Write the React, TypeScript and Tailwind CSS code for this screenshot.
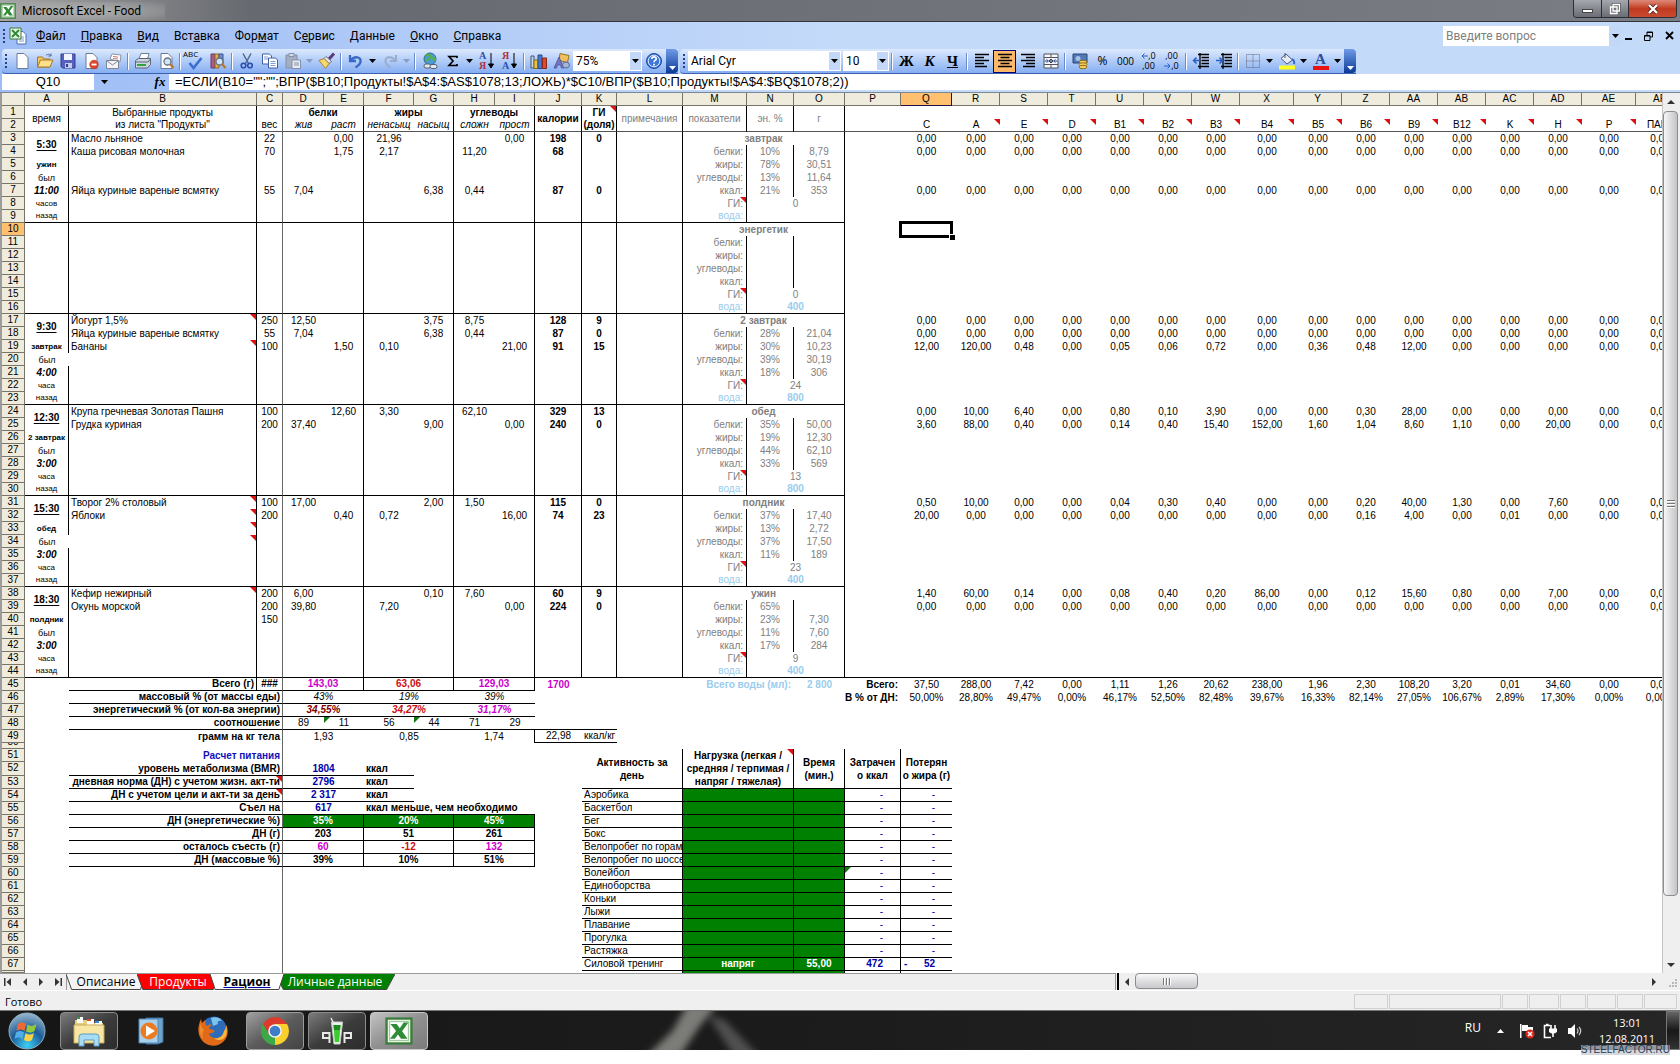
import type { ReactNode } from "react";
import clsx from "clsx";

interface Cell {
  value?: ReactNode;
  style?: string;
  colSpan?: number;
  rowSpan?: number;
  note?: boolean;
  flag?: boolean;
}

const COLUMNS = [
  "A", "B", "C", "D", "E", "F", "G", "H", "I", "J", "K", "L", "M", "N", "O", "P",
  "Q", "R", "S", "T", "U", "V", "W", "X", "Y", "Z", "AA", "AB", "AC", "AD", "AE", "AF",
];

const WIDTHS = [
  "w-[44px]", "w-[188px]", "w-[26px]", "w-[41px]", "w-[40px]", "w-[50px]", "w-[40px]",
  "w-[41px]", "w-[40px]", "w-[47px]", "w-[35px]", "w-[66px]", "w-[64px]", "w-[47px]",
  "w-[51px]", "w-[56px]", "w-[51px]", "w-[48px]", "w-[48px]", "w-[48px]", "w-[48px]",
  "w-[48px]", "w-[48px]", "w-[54px]", "w-[48px]", "w-[48px]", "w-[48px]", "w-[48px]",
  "w-[48px]", "w-[48px]", "w-[54px]", "w-[48px]",
];

const LAST_ROW = 68;
const cells: Record<string, Cell> = {};

const put = (ref: string, value: ReactNode, style = "", rest: Partial<Cell> = {}) => {
  cells[ref] = { value, style, ...rest };
};

const GREY = "text-center text-[#808080]";
const WATER = "text-[#99ccee]";

// header
put("A1", "время", "text-center align-middle", { rowSpan: 2 });
put("B1", "Выбранные продукты", "text-center");
put("B2", 'из листа "Продукты"', "text-center");
put("C2", "вес", "text-center");
put("D1", "белки", "text-center font-bold", { colSpan: 2 });
put("F1", "жиры", "text-center font-bold", { colSpan: 2 });
put("H1", "углеводы", "text-center font-bold", { colSpan: 2 });
["жив", "раст", "ненасыщ", "насыщ", "сложн", "прост"].forEach((name, i) =>
  put(`${COLUMNS[3 + i]}2`, name, "text-center italic")
);
put("J1", "калории", "text-center align-middle font-bold", { rowSpan: 2 });
put("K1", "ГИ", "text-center font-bold", { note: true });
put("K2", "(доля)", "text-center font-bold");
put("L1", "примечания", `align-middle ${GREY}`, { rowSpan: 2 });
put("M1", "показатели", `align-middle ${GREY}`, { rowSpan: 2 });
put("N1", "эн. %", `align-middle ${GREY}`, { rowSpan: 2 });
put("O1", "г", `align-middle ${GREY}`, { rowSpan: 2 });
["C", "A", "E", "D", "B1", "B2", "B3", "B4", "B5", "B6", "B9", "B12", "K", "H", "P", "ПАБК"].forEach(
  (name, i) => put(`${COLUMNS[16 + i]}2`, name, "text-center", { note: i > 0 && i < 15 })
);

// meals
interface Meal {
  time?: string;
  before?: string;
  ago?: string;
  unit?: string;
  title: string;
  stats: string[];
  gi: string;
  water: string;
}

const meals: Meal[] = [
  { time: "5:30", before: "ужин", ago: "11:00", unit: "часов", title: "завтрак", stats: ["10%", "8,79", "78%", "30,51", "13%", "11,64", "21%", "353"], gi: "0", water: "" },
  { title: "энергетик", stats: [], gi: "0", water: "400" },
  { time: "9:30", before: "завтрак", ago: "4:00", unit: "часа", title: "2 завтрак", stats: ["28%", "21,04", "30%", "10,23", "39%", "30,19", "18%", "306"], gi: "24", water: "800" },
  { time: "12:30", before: "2 завтрак", ago: "3:00", unit: "часа", title: "обед", stats: ["35%", "50,00", "19%", "12,30", "44%", "62,10", "33%", "569"], gi: "13", water: "800" },
  { time: "15:30", before: "обед", ago: "3:00", unit: "часа", title: "полдник", stats: ["37%", "17,40", "13%", "2,72", "37%", "17,50", "11%", "189"], gi: "23", water: "400" },
  { time: "18:30", before: "полдник", ago: "3:00", unit: "часа", title: "ужин", stats: ["65%", "", "23%", "7,30", "11%", "7,60", "17%", "284"], gi: "9", water: "400" },
];

meals.forEach((meal, i) => {
  const top = 3 + i * 7;
  if (meal.time) {
    put(`A${top}`, meal.time, "text-center align-middle font-bold underline underline-offset-2", { rowSpan: 2 });
    put(`A${top + 2}`, meal.before, "text-center text-[8px] font-bold");
    put(`A${top + 3}`, "был", "text-center text-[9px]");
    put(`A${top + 4}`, meal.ago, "text-center font-bold italic");
    put(`A${top + 5}`, meal.unit, "text-center text-[8px]");
    put(`A${top + 6}`, "назад", "text-center text-[8px]");
  }
  put(`M${top}`, meal.title, `font-bold ${GREY}`, { colSpan: 3 });
  ["белки:", "жиры:", "углеводы:", "ккал:"].forEach((label, n) => {
    put(`M${top + 1 + n}`, label, "pr-[3px] text-right text-[#808080]");
    put(`N${top + 1 + n}`, meal.stats[n * 2], GREY);
    put(`O${top + 1 + n}`, meal.stats[n * 2 + 1], GREY);
  });
  put(`M${top + 5}`, "ГИ:", "pr-[3px] text-right text-[#808080]", { note: true });
  put(`N${top + 5}`, meal.gi, GREY, { colSpan: 2 });
  put(`M${top + 6}`, "вода:", `pr-[3px] text-right ${WATER}`);
  put(`N${top + 6}`, meal.water, `text-center font-bold ${WATER}`, { colSpan: 2 });
});

// row, product, then columns C..K
const foods: [number, string, string, boolean?][] = [
  [3, "Масло льняное", "22||0,00|21,96|||0,00|198|0"],
  [4, "Каша рисовая молочная", "70||1,75|2,17||11,20||68|"],
  [7, "Яйца куриные вареные всмятку", "55|7,04|||6,38|0,44||87|0"],
  [17, "Йогурт 1,5%", "250|12,50|||3,75|8,75||128|9", true],
  [18, "Яйца куриные вареные всмятку", "55|7,04|||6,38|0,44||87|0"],
  [19, "Бананы", "100||1,50|0,10|||21,00|91|15", true],
  [24, "Крупа гречневая Золотая Пашня", "100||12,60|3,30||62,10||329|13"],
  [25, "Грудка куриная", "200|37,40|||9,00||0,00|240|0"],
  [31, "Творог 2% столовый", "100|17,00|||2,00|1,50||115|0", true],
  [32, "Яблоки", "200||0,40|0,72|||16,00|74|23", true],
  [33, "", "", true],
  [34, "", "", true],
  [38, "Кефир нежирный", "200|6,00|||0,10|7,60||60|9", true],
  [39, "Окунь морской", "200|39,80||7,20|||0,00|224|0"],
  [40, "", "150"],
];

foods.forEach(([row, name, numbers, note]) => {
  put(`B${row}`, name, "pl-[2px]", { note });
  numbers.split("|").forEach((n, i) =>
    put(`${COLUMNS[2 + i]}${row}`, n, i > 6 ? "text-center font-bold" : "text-center")
  );
});

// vitamins, columns Q..AF
const ZERO = Array(16).fill("0,00").join(" ");
const vitamins: [number, string][] = [
  [3, ZERO],
  [4, ZERO],
  [7, ZERO],
  [17, ZERO],
  [18, ZERO],
  [19, "12,00 120,00 0,48 0,00 0,05 0,06 0,72 0,00 0,36 0,48 12,00 0,00 0,00 0,00 0,00 0,00"],
  [24, "0,00 10,00 6,40 0,00 0,80 0,10 3,90 0,00 0,00 0,30 28,00 0,00 0,00 0,00 0,00 0,00"],
  [25, "3,60 88,00 0,40 0,00 0,14 0,40 15,40 152,00 1,60 1,04 8,60 1,10 0,00 20,00 0,00 0,00"],
  [31, "0,50 10,00 0,00 0,00 0,04 0,30 0,40 0,00 0,00 0,20 40,00 1,30 0,00 7,60 0,00 0,00"],
  [32, "20,00 0,00 0,00 0,00 0,00 0,00 0,00 0,00 0,00 0,16 4,00 0,00 0,01 0,00 0,00 0,00"],
  [38, "1,40 60,00 0,14 0,00 0,08 0,40 0,20 86,00 0,00 0,12 15,60 0,80 0,00 7,00 0,00 0,00"],
  [39, ZERO],
  [45, "37,50 288,00 7,42 0,00 1,11 1,26 20,62 238,00 1,96 2,30 108,20 3,20 0,01 34,60 0,00 0,00"],
  [46, "50,00% 28,80% 49,47% 0,00% 46,17% 52,50% 82,48% 39,67% 16,33% 82,14% 27,05% 106,67% 2,89% 17,30% 0,00% 0,00%"],
];

vitamins.forEach(([row, list]) =>
  list.split(" ").forEach((n, i) => put(`${COLUMNS[16 + i]}${row}`, n, "text-center"))
);

// totals
const label = "pr-[2px] text-right font-bold";
const bold = "text-center font-bold";
const pink = "text-[#cc00cc]";
const red = "text-[#cc1111]";

const triple = (row: number, values: string[], styles: string[]) =>
  ["D", "F", "H"].forEach((c, i) => put(`${c}${row}`, values[i], styles[i] ?? styles[0], { colSpan: 2 }));

put("B45", "Всего (г)", label);
put("C45", "###", "text-center font-bold");
triple(45, ["143,03", "63,06", "129,03"], [`${bold} ${pink}`, `${bold} ${red}`, `${bold} ${pink}`]);
put("J45", "1700", `${bold} ${pink}`);
put("M45", "Всего воды (мл):", `pr-[3px] text-right font-bold ${WATER}`, { colSpan: 2 });
put("O45", "2 800", `text-center font-bold ${WATER}`);
put("P45", "Всего:", "pr-[3px] text-right font-bold");
put("P46", "В % от ДН:", "pr-[3px] text-right font-bold");

const labels: [number, string, boolean?][] = [
  [46, "массовый % (от массы еды)"],
  [47, "энергетический % (от кол-ва энергии)"],
  [48, "соотношение"],
  [49, "грамм на кг тела"],
  [51, "Расчет питания"],
  [52, "уровень метаболизма (BMR)"],
  [53, "дневная норма (ДН) с учетом жизн. акт-ти", true],
  [54, "ДН с учетом цели и акт-ти за день", true],
  [55, "Съел на"],
  [56, "ДН (энергетические %)"],
  [57, "ДН (г)"],
  [58, "осталось съесть (г)"],
  [59, "ДН (массовые %)"],
];
labels.forEach(([row, text, note]) =>
  put(`B${row}`, text, clsx(label, row === 51 && "text-[#1111bb]"), { colSpan: 2, note })
);

triple(46, ["43%", "19%", "39%"], ["text-center italic"]);
triple(47, ["34,55%", "34,27%", "31,17%"], [`${bold} italic text-[#800000]`, `${bold} italic ${red}`, `${bold} italic ${pink}`]);
["89", "11", "56", "44", "71", "29"].forEach((n, i) =>
  put(`${COLUMNS[3 + i]}48`, n, "text-center", { flag: i === 1 || i === 3 })
);
triple(49, ["1,93", "0,85", "1,74"], ["text-center"]);
put("J49", "22,98", "text-center");
put("K49", "ккал/кг", "pl-[2px]");

const blue = `${bold} text-[#0000aa]`;
["1804", "2796", "2 317", "617"].forEach((n, i) => {
  put(`D${52 + i}`, n, blue, { colSpan: 2 });
  put(`F${52 + i}`, i < 3 ? "ккал" : "ккал меньше, чем необходимо", "pl-[2px] font-bold");
});
triple(56, ["35%", "20%", "45%"], [`${bold} bg-[#008000] text-white`]);
triple(57, ["203", "51", "261"], [bold]);
triple(58, ["60", "-12", "132"], [`${bold} ${pink}`, `${bold} ${red}`, `${bold} ${pink}`]);
triple(59, ["39%", "10%", "51%"], [bold]);

// activity
const head = "text-center align-middle font-bold whitespace-normal leading-[13px]";
put("K51", <>Активность за<br />день</>, head, { colSpan: 2, rowSpan: 3 });
put("M51", <>Нагрузка (легкая /<br />средняя / терпимая /<br />напряг / тяжелая)</>, head, { colSpan: 2, rowSpan: 3, note: true });
put("O51", <>Время<br />(мин.)</>, head, { rowSpan: 3 });
put("P51", <>Затрачен<br />о ккал</>, head, { rowSpan: 3 });
put("Q51", <>Потерян<br />о жира (г)</>, head, { rowSpan: 3 });

const sports = [
  "Аэробика", "Баскетбол", "Бег", "Бокс", "Велопробег по горам", "Велопробег по шоссе", "Волейбол",
  "Единоборства", "Коньки", "Лыжи", "Плавание", "Прогулка", "Растяжка", "Силовой тренинг", "",
];
sports.forEach((name, i) => {
  const row = 54 + i;
  const active = name === "Силовой тренинг";
  const sum = clsx("pr-[17px] text-right text-[#0000aa]", active && "font-bold");
  put(`K${row}`, name, "pl-[2px] overflow-hidden", { colSpan: 2 });
  put(`M${row}`, active && "напряг", "bg-[#008000] text-center font-bold text-white", { colSpan: 2 });
  put(`O${row}`, active && "55,00", "bg-[#008000] text-center font-bold text-white");
  if (!name) return;
  put(`P${row}`, active ? "472" : "-", sum, { flag: row === 60 });
  put(
    `Q${row}`,
    active ? <span className="flex justify-between pl-[3px]"><span>-</span><span>52</span></span> : "-",
    sum
  );
});

const within = (c: number, from: string, to: string) =>
  c >= COLUMNS.indexOf(from) && c <= COLUMNS.indexOf(to);

const oneOf = (c: number, names: string) => names.includes(COLUMNS[c]) && COLUMNS[c].length === 1;

function rightLine(r: number, c: number) {
  if (COLUMNS[c] === "C") return "border-r border-r-[#666666]";
  const k = (r - 3) % 7;
  const line =
    (r <= 2 && oneOf(c, "ABEGIJKLMNO")) ||
    (r > 2 && r <= 44 &&
      (oneOf(c, "BEGIJKLO") ||
        (oneOf(c, "A") && r !== 20 && r !== 34) ||
        (oneOf(c, "M") && k > 0) ||
        (oneOf(c, "N") && k > 0 && k < 5))) ||
    (r === 45 && oneOf(c, "BEGI")) ||
    (r === 49 && oneOf(c, "I")) ||
    (r >= 51 && oneOf(c, "LNOP")) ||
    (r >= 56 && r <= 59 && oneOf(c, "EGI"));
  return line && "border-r border-r-black";
}

function bottomLine(r: number, c: number) {
  if (r === 2) return "border-b border-b-[#555555]";
  const line =
    r === 44 ||
    (r >= 9 && r < 44 && r % 7 === 2 && within(c, "A", "O")) ||
    (r >= 45 && r <= 47 && within(c, "B", "I")) ||
    (r === 48 && within(c, "B", "K")) ||
    (r === 49 && within(c, "J", "K")) ||
    (r >= 52 && r <= 54 && within(c, "B", "F")) ||
    (r >= 55 && r <= 59 && within(c, "B", "I")) ||
    (r >= 53 && r <= 67 && within(c, "K", "Q"));
  return line && "border-b border-b-black";
}

function rowHeight(r: number) {
  if (r === 50) return "h-[6px]";
  if (r === LAST_ROW) return "h-[2px]";
  return "h-[13px]";
}

function SheetRow({ row, taken }: { row: number; taken: Set<string> }) {
  const tds: ReactNode[] = [];
  const thin = row === 50 || row === LAST_ROW;
  COLUMNS.forEach((name, c) => {
    if (taken.has(`${row}:${c}`)) return;
    const cell = cells[name + row] ?? {};
    const { colSpan = 1, rowSpan = 1 } = cell;
    for (let y = row; y < row + rowSpan; y++) {
      for (let x = c; x < c + colSpan; x++) taken.add(`${y}:${x}`);
    }
    tds.push(
      <td
        key={name}
        colSpan={colSpan}
        rowSpan={rowSpan}
        className={clsx(
          "relative p-0 whitespace-nowrap",
          !cell.style?.includes("align-") && "align-bottom",
          rightLine(row, c + colSpan - 1),
          bottomLine(row + rowSpan - 1, c),
          cell.style
        )}
      >
        {cell.value}
        {cell.note && (
          <span className="absolute top-0 right-0 border-t-[6px] border-l-[6px] border-t-[#dd1111] border-l-transparent" />
        )}
        {cell.flag && (
          <span className="absolute top-0 left-0 border-t-[6px] border-r-[6px] border-t-[#117711] border-r-transparent" />
        )}
        {name === "Q" && row === 10 && (
          <span className="absolute -top-[2px] -right-px -bottom-[2px] -left-[2px] z-10 border-[3px] border-black">
            <span className="absolute -right-[5px] -bottom-[5px] h-[6px] w-[6px] border-t border-l border-white bg-black" />
          </span>
        )}
      </td>
    );
  });
  return (
    <tr className={rowHeight(row)}>
      <th
        scope="row"
        className={clsx(
          "border-r border-b border-[#77756a] p-0 text-center font-normal",
          row === 10 ? "bg-[#ffc070]" : "bg-[#efecdd]"
        )}
      >
        {thin ? (
          <span className={clsx("flex items-end justify-center overflow-hidden", row === 50 ? "h-[5px]" : "h-px")}>
            {row === 50 && row}
          </span>
        ) : (
          row
        )}
      </th>
      {tds}
    </tr>
  );
}

function Sheet() {
  const taken = new Set<string>();
  return (
    <table className="w-px table-fixed border-separate border-spacing-0 text-[10px] leading-[12px]">
      <colgroup>
        <col className="w-[23px]" />
        {WIDTHS.map((w, i) => (
          <col key={i} className={w} />
        ))}
      </colgroup>
      <thead>
        <tr className="h-[13px]">
          <th className="border-r border-b border-[#77756a] bg-[#efecdd] p-0" />
          {COLUMNS.map((name) => (
            <th
              key={name}
              scope="col"
              className={clsx(
                "border-r border-b p-0 text-center font-normal",
                name === "Q" ? "border-[#221144] bg-[#ffc070]" : "border-[#77756a] bg-[#efecdd]"
              )}
            >
              {name}
            </th>
          ))}
        </tr>
      </thead>
      <tbody>
        {Array.from({ length: LAST_ROW }, (_, i) => (
          <SheetRow key={i} row={i + 1} taken={taken} />
        ))}
      </tbody>
    </table>
  );
}

const Icon = ({ children, size = 18 }: { children: ReactNode; size?: number }) => (
  <svg width={size} height={size} viewBox="0 0 18 18" fill="none" aria-hidden="true">
    {children}
  </svg>
);

const ExcelMark = ({ size = 18 }: { size?: number }) => (
  <Icon size={size}>
    <rect x="1" y="1" width="16" height="16" fill="#e9f3e6" stroke="#3b7d3c" strokeWidth="1.500" />
    <rect x="3" y="3" width="12" height="12" fill="#fff" stroke="#8cbf88" strokeWidth="0.600" />
    <path d="M3.500 4.500h4l2 2.700 2.500-3.700h3l-4 5.600 3.500 4.900h-4.200l-2-2.800-2 2.800H3.200l3.900-5z" fill="#2f8b36" />
  </Icon>
);

const page = <path d="M4 1.500h7l4 4v11H4z" fill="#fff" stroke="#6b7a99" />;
const lens = (
  <>
    <circle cx="10.500" cy="9.500" r="3.500" fill="#cfe6fa" stroke="#66707f" strokeWidth="1.300" />
    <path d="M13 12l3.500 4" stroke="#b97a2a" strokeWidth="2.400" />
  </>
);

const icons: Record<string, ReactNode> = {
  Книга: (
    <>
      <path d="M8 4.500h6l3 3v9.500H8z" fill="#fff" stroke="#4a6fb0" />
      <path d="M10 10h5M10 12h5M10 14h5" stroke="#7f9bd8" />
      <path d="M1 1h11v11H1z" fill="#e9f3e6" stroke="#3b7d3c" />
      <path d="M3 3l7 7M10 3l-7 7" stroke="#2f8b36" strokeWidth="2" />
    </>
  ),
  Создать: page,
  Открыть: (
    <>
      <path d="M1.500 15V5h5l1.500 2h6v8z" fill="#f5c75a" stroke="#a8792a" />
      <path d="M1.500 15l3-7h12.500l-3 7z" fill="#ffe08a" stroke="#a8792a" />
      <path d="M10 3.500c2-2 4-1.500 5 .500m0-2.500V4h-2.500" stroke="#4a6a9a" />
    </>
  ),
  Сохранить: (
    <>
      <path d="M2 2h14v14H3.500L2 14.500z" fill="#5560c0" stroke="#353c8c" />
      <path d="M5 2h8v6H5z" fill="#f2f5ff" />
      <path d="M6 11h7v5H6z" fill="#c6cbe8" />
      <path d="M7 12h2v3H7z" fill="#353c8c" />
    </>
  ),
  Разрешения: (
    <>
      {page}
      <circle cx="12" cy="12.500" r="4.300" fill="#e0482c" stroke="#b03018" strokeWidth="0.600" />
      <path d="M9.500 12.500h5" stroke="#fff" strokeWidth="1.800" />
    </>
  ),
  Сообщение: (
    <>
      <path d="M5 7l2-5 9 1-1 7z" fill="#fff" stroke="#8a94a8" />
      <path d="M8 4.500l5 .600M8 6.500l5 .500" stroke="#c77" />
      <path d="M1.500 8.500h12v8h-12z" fill="#f4f4f4" stroke="#7f8798" />
      <path d="M1.500 8.500l6 4.500 6-4.500" stroke="#7f8798" />
    </>
  ),
  Печать: (
    <>
      <path d="M5 7l2-5.500h8L13.500 7z" fill="#fff" stroke="#6f7f96" />
      <path d="M1.500 8.500l3-2h12v6l-3 3.500h-12z" fill="#cdd5e0" stroke="#5b6678" />
      <path d="M1.500 10h12.500l2.500-3" stroke="#5b6678" />
      <path d="M3 13h9" stroke="#2fa33a" strokeWidth="2" />
    </>
  ),
  Просмотр: <>{page}{lens}</>,
  Орфография: <path d="M3.500 11l4 5L15.500 6" stroke="#3a6fd0" strokeWidth="2.600" />,
  Справочники: (
    <>
      <path d="M2 2h4v14H2z" fill="#b05a8c" stroke="#6c3760" />
      <path d="M6 2h4v14H6z" fill="#e2b04a" stroke="#8a6a20" />
      <path d="M10 2h4v10h-4z" fill="#6f8ed6" stroke="#3d5590" />
      {lens}
    </>
  ),
  Вырезать: (
    <>
      <path d="M5 1.500l5.500 10M13 1.500L7.500 11.500" stroke="#51698e" strokeWidth="1.500" />
      <circle cx="5.500" cy="13.500" r="2.300" stroke="#2b4fae" strokeWidth="1.600" />
      <circle cx="12" cy="13.500" r="2.300" stroke="#2b4fae" strokeWidth="1.600" />
    </>
  ),
  Копировать: (
    <>
      <path d="M1.500 2h7l2 2v8h-9z" fill="#fff" stroke="#3e5fa8" />
      <path d="M7.500 6h7l2 2v8h-9z" fill="#fff" stroke="#3e5fa8" />
      <path d="M3 5h4M3 7h4M9.500 9.500h5M9.500 11.500h5M9.500 13.500h5" stroke="#7f9bd8" />
    </>
  ),
  Вставить: (
    <>
      <path d="M2 3h11v13H2z" fill="#a3aec2" stroke="#8490a8" />
      <path d="M5 1.500h5v3H5z" fill="#d4dae5" stroke="#8490a8" />
      <path d="M8 8h8.500v8.500H8z" fill="#e8ecf4" stroke="#8490a8" />
      <path d="M10 11h5M10 13h5" stroke="#8490a8" />
    </>
  ),
  "Формат по образцу": (
    <>
      <path d="M16 1.500l-5 5.500" stroke="#5a3a78" strokeWidth="3" />
      <path d="M8 4.500l5.500 5-2.500 2-5-5z" fill="#e8e8f0" stroke="#66708a" />
      <path d="M6 6.500L1 8.500l6.500 8L11 11.500z" fill="#f5d870" stroke="#a8832c" />
    </>
  ),
  Отменить: <path d="M3 3v6h6M3.500 8.500c4-5 11-4 10 1.500-.500 3-3 4-5 5.500" stroke="#3868c8" strokeWidth="2.300" />,
  Вернуть: <path d="M15 3v6H9M14.500 8.500c-4-5-11-4-10 1.500.500 3 3 4 5 5.500" stroke="#9aaccc" strokeWidth="2" />,
  Гиперссылка: (
    <>
      <circle cx="9" cy="7" r="6" fill="#4a9bd8" stroke="#2c6c8c" />
      <path d="M5 3.500c3-1.500 5 0 4 2s-3 1-3 4M11 6c2 0 3 1 3 3" stroke="#55b04a" strokeWidth="2.300" />
      <rect x="3" y="12" width="7" height="4" rx="2" fill="#e4e8ef" stroke="#55606f" />
      <rect x="9" y="12.500" width="7" height="4" rx="2" fill="#e4e8ef" stroke="#55606f" />
    </>
  ),
  Автосумма: <path d="M13 6V4.500H5L9 9l-4 4.500h8V12" stroke="#000" strokeWidth="1.700" />,
  Мастер: (
    <>
      <path d="M1 4v12h3V4z" fill="#c9d6ea" stroke="#44546c" />
      <path d="M4 8h4v8.500H4z" fill="#e8c43c" stroke="#8c6a14" />
      <path d="M8 3h4v13.500H8z" fill="#4a78d0" stroke="#27488c" />
      <path d="M12.500 6h4v10.500h-4z" fill="#dc4a30" stroke="#8c2614" />
    </>
  ),
  Рисование: (
    <>
      <path d="M7 1.500l9 2-1.500 7-8.500-2z" fill="#f0c060" stroke="#9a7420" />
      <path d="M1 16L6 5l5 11h-2.500L7.500 13h-3L3.500 16z" fill="#7474c4" stroke="#45458c" strokeWidth="0.700" />
      <ellipse cx="13" cy="13" rx="3.500" ry="3" fill="#a6b4d8" stroke="#5b6a98" />
    </>
  ),
  Справка: (
    <>
      <circle cx="9" cy="9" r="7.500" fill="#3f78dc" stroke="#1f4aa0" />
      <circle cx="9" cy="9" r="5.800" stroke="#dbe8ff" />
      <path d="M6.800 7c0-3 4.600-2.800 4.400-.200C11 8.500 9 8.500 9 10.300M9 11.800v1.600" stroke="#fff" strokeWidth="1.700" />
    </>
  ),
  "По левому краю": <path d="M2 2.500h14M2 5.500h9M2 8.500h14M2 11.500h9M2 14.500h12" stroke="#000" strokeWidth="1.500" />,
  "По центру": <path d="M2 2.500h14M4.500 5.500h9M2 8.500h14M4.500 11.500h9M2 14.500h14" stroke="#000" strokeWidth="1.500" />,
  "По правому краю": <path d="M2 2.500h14M7 5.500h9M2 8.500h14M7 11.500h9M4 14.500h12" stroke="#000" strokeWidth="1.500" />,
  "Объединить ячейки": (
    <>
      <path d="M2 2h14v14H2zM2 5.500h14M2 12.500h14M9 2v3.500M9 12.500V16" fill="#f4f7ff" stroke="#555" />
      <path d="M2.500 9h3.500M15.500 9H12M4.500 7.500L6.500 9l-2 1.500M13.500 7.500L11.500 9l2 1.500" stroke="#2b4fae" />
      <circle cx="9" cy="9" r="1.400" stroke="#000" />
    </>
  ),
  "Денежный формат": (
    <>
      <path d="M2 2h14v9H2z" fill="#4f79b8" stroke="#2c4470" />
      <circle cx="7" cy="6.500" r="2.500" fill="#a8c3e6" />
      <ellipse cx="12" cy="10" rx="4" ry="1.700" fill="#f3cf5c" stroke="#94701c" />
      <ellipse cx="12" cy="12.500" rx="4" ry="1.700" fill="#f3cf5c" stroke="#94701c" />
      <ellipse cx="12" cy="15" rx="4" ry="1.700" fill="#f3cf5c" stroke="#94701c" />
    </>
  ),
  "Уменьшить отступ": (
    <>
      <path d="M6 2.500h11M9.500 5.500H17M9.500 8.500H17M9.500 11.500H17M6 14.500h11M8 1v16" stroke="#000" strokeWidth="1.300" />
      <path d="M8 8.500H2M4.500 5.500l-3 3 3 3" stroke="#2b5fc8" strokeWidth="1.500" />
    </>
  ),
  "Увеличить отступ": (
    <>
      <path d="M6 2.500h11M9.500 5.500H17M9.500 8.500H17M9.500 11.500H17M6 14.500h11M8 1v16" stroke="#000" strokeWidth="1.300" />
      <path d="M1 8.500h6M4.500 5.500l3 3-3 3" stroke="#2b5fc8" strokeWidth="1.500" />
    </>
  ),
  Границы: <path d="M2.500 2.500h13v13h-13zM9 2.500v13M2.500 9h13" stroke="#667" strokeDasharray="1 1" />,
  "Цвет заливки": (
    <>
      <path d="M8 2l6.500 6-5.500 4-6-5.500z" fill="#e6ecf8" stroke="#4a5a7c" />
      <path d="M14 7c2.500 1 2.500 3 2 5" stroke="#2b5fc8" strokeWidth="1.800" />
      <path d="M7 6V1" stroke="#4a5a7c" />
      <path d="M1 13.500h16v4H1z" fill="#ffff22" />
    </>
  ),
};

const LABEL: Record<string, string> = { Мастер: "Мастер диаграмм" };

function Tool({ name }: { name: string }) {
  const pressed = name === "По центру";
  return (
    <button
      aria-label={LABEL[name] ?? name}
      className={clsx(
        "relative flex h-[23px] w-[23px] shrink-0 items-center justify-center",
        pressed && "border border-[#000080] bg-[#ffb868]"
      )}
    >
      <Icon>{icons[name]}</Icon>
      {name === "Орфография" && (
        <span className="absolute top-0 left-0 text-[8px] leading-[8px]">ABC</span>
      )}
    </button>
  );
}

function TextTool({ name, className, children }: { name: string; className: string; children: ReactNode }) {
  return (
    <button aria-label={name} className={clsx("flex h-[23px] w-[23px] shrink-0 items-center justify-center", className)}>
      {children}
    </button>
  );
}

const Triangle = ({ className = "" }: { className?: string }) => (
  <svg width="7" height="4" viewBox="0 0 7 4" className={className} fill="currentColor" aria-hidden="true">
    <path d="M0 0h7L3.500 4z" />
  </svg>
);

const More = ({ name, faded }: { name: string; faded?: boolean }) => (
  <button aria-label={name} className={clsx("flex h-[23px] w-[11px] shrink-0 items-center justify-center", faded && "text-[#8c9cc0]")}>
    <Triangle />
  </button>
);

const Separator = () => <span className="mx-[2px] h-[17px] w-[2px] shrink-0 border-l border-[#6a8ccb] bg-white" />;

const Handle = () => (
  <span className="mx-[3px] flex flex-col gap-[2px]">
    {[0, 1, 2, 3].map((i) => (
      <span key={i} className="h-[2px] w-[2px] bg-[#27418c]" />
    ))}
  </span>
);

const ToolbarEnd = () => (
  <button
    aria-label="Параметры панели"
    className="ml-px flex h-[24px] w-[12px] shrink-0 items-end justify-center rounded-r bg-linear-to-b from-[#6f9be6] to-[#0a3a96] pb-[3px] text-white"
  >
    <Triangle />
  </button>
);

function Combo({ name, value, className }: { name: string; value: string; className: string }) {
  return (
    <span className={clsx("relative flex h-[20px] shrink-0 items-center border border-white bg-white", className)}>
      <select aria-label={name} defaultValue={value} className="h-full w-full appearance-none pl-[2px] font-['Roboto',sans-serif] text-[12px]">
        <option>{value}</option>
      </select>
      <span className="pointer-events-none absolute inset-y-0 right-0 flex w-[11px] items-center justify-center bg-[#c3d8f8]">
        <Triangle />
      </span>
    </span>
  );
}

function SortTool({ name, top, bottom }: { name: string; top: string; bottom: string }) {
  const up = name.endsWith("возрастанию");
  return (
    <TextTool name={name} className="gap-[2px]">
      <span className="flex flex-col font-['Liberation_Serif',serif] text-[10px] leading-[10px] font-bold">
        <span className={up ? "text-[#2b4fae]" : "text-[#b03040]"}>{top}</span>
        <span className={up ? "text-[#b03040]" : "text-[#2b4fae]"}>{bottom}</span>
      </span>
      <svg width="6" height="16" viewBox="0 0 6 16" aria-hidden="true">
        <path d="M3 0v13M.500 11L3 15l2.500-4z" stroke="#000" />
      </svg>
    </TextTool>
  );
}

function Digits({ name, more }: { name: string; more?: boolean }) {
  const arrow = (
    <svg width="7" height="6" viewBox="0 0 7 6" fill="none" stroke="#2b5fc8" aria-hidden="true">
      <path d={more ? "M7 3H1M3.500.500L1 3l2.500 2.500" : "M0 3h6M3.500.500L6 3 3.500 5.500"} />
    </svg>
  );
  return (
    <TextTool name={name} className="flex-col text-[9px] leading-[10px]">
      <span className="flex items-center">
        {more && arrow}
        {more ? ",0" : ",00"}
      </span>
      <span className="flex items-center">
        {!more && arrow}
        {more ? ",00" : ",0"}
      </span>
    </TextTool>
  );
}

function TitleBar() {
  return (
    <header className="flex h-[22px] items-center justify-between border-b border-[#33353a] bg-linear-to-r from-[#a6a6a6] via-[#66696f] via-15% to-[#7a7d84]">
      <div className="flex items-center gap-[6px] bg-radial from-[#b0b0b0] to-transparent">
        <ExcelMark size={16} />
        <h1 className="pr-6 font-['Roboto',sans-serif] text-[12px]">Microsoft Excel - Food</h1>
      </div>
      <div className="mr-[3px] flex h-[18px] self-start overflow-hidden rounded-b border border-t-0 border-[#2c2e33] text-white">
        <button aria-label="Свернуть" className="flex w-[28px] items-end justify-center border-r border-[#2c2e33] bg-linear-to-b from-[#a4a7ad] to-[#6a6d74] pb-[4px]">
          <span className="h-[4px] w-[11px] border border-[#444] bg-white" />
        </button>
        <button aria-label="Развернуть" className="flex w-[27px] items-center justify-center border-r border-[#2c2e33] bg-linear-to-b from-[#a4a7ad] to-[#6a6d74]">
          <svg width="12" height="12" viewBox="0 0 12 12" fill="none" aria-hidden="true">
            <path d="M4 1.500h6.500V8H4z" stroke="#444" strokeWidth="2.500" />
            <path d="M4 1.500h6.500V8H4zM1.500 4H8v6.500H1.500z" fill="#777" stroke="#fff" strokeWidth="1.300" />
          </svg>
        </button>
        <button aria-label="Закрыть" className="flex w-[47px] items-center justify-center bg-linear-to-b from-[#dc8a78] via-[#c23a20] to-[#c84a30]">
          <svg width="12" height="10" viewBox="0 0 12 10" aria-hidden="true">
            <path d="M2 1l8 8M10 1L2 9" stroke="#5c2018" strokeWidth="4" />
            <path d="M2 1l8 8M10 1L2 9" stroke="#fff" strokeWidth="2.400" />
          </svg>
        </button>
      </div>
    </header>
  );
}

const MENU: [string, string, string][] = [
  ["", "Ф", "айл"], ["", "П", "равка"], ["", "В", "ид"], ["Вст", "а", "вка"], ["Фор", "м", "ат"],
  ["С", "е", "рвис"], ["", "Д", "анные"], ["", "О", "кно"], ["", "С", "правка"],
];

function MenuBar() {
  return (
    <nav aria-label="Меню" className="flex h-[27px] items-center justify-between">
      <div className="flex items-center">
        <Handle />
        <span className="mr-[9px] ml-px">
          <Icon>{icons["Книга"]}</Icon>
        </span>
        <div className="flex gap-[15px] font-['Roboto',sans-serif] text-[12px] leading-[14px]">
          {MENU.map(([a, b, c]) => (
            <button key={a + b + c}>
              {a}
              <u>{b}</u>
              {c}
            </button>
          ))}
        </div>
      </div>
      <div className="flex items-center gap-[12px] pr-[6px]">
        <span className="-mr-[10px] flex h-[20px] w-[178px] items-center bg-white">
          <input
            aria-label="Введите вопрос"
            placeholder="Введите вопрос"
            className="w-full pl-[3px] font-['Roboto',sans-serif] text-[12px] placeholder:text-[#808080]"
          />
          <span className="flex h-full w-[12px] shrink-0 items-center justify-center bg-[#c3d8f8]">
            <Triangle />
          </span>
        </span>
        <button aria-label="Свернуть окно" className="ml-[2px] h-[9px] w-[7px] border-b-2 border-black" />
        <button aria-label="Восстановить окно">
          <svg width="9" height="10" viewBox="0 0 9 10" fill="none" stroke="#000" aria-hidden="true">
            <path d="M3 4V1h5.500v5H6M3 1.500h5.500M.500 4.500H6v5H.500zM.500 5H6" />
          </svg>
        </button>
        <button aria-label="Закрыть окно">
          <svg width="9" height="9" viewBox="0 0 9 9" aria-hidden="true">
            <path d="M1 1l7 7M8 1L1 8" stroke="#000" strokeWidth="1.800" />
          </svg>
        </button>
      </div>
    </nav>
  );
}

function Toolbars() {
  const bar = "flex h-[25px] items-center rounded-l border-b border-[#3b62b0] bg-linear-to-b from-[#dce9fd] to-[#86aef2]";
  const serif = "font-['Liberation_Serif',serif] text-[15px] font-bold";
  return (
    <div className="flex gap-[2px] pl-[2px] font-['Open_Sans',sans-serif]">
      <div className={bar}>
        <Handle />
        <Tool name="Создать" />
        <Tool name="Открыть" />
        <Tool name="Сохранить" />
        <Tool name="Разрешения" />
        <Tool name="Сообщение" />
        <Separator />
        <Tool name="Печать" />
        <Tool name="Просмотр" />
        <Separator />
        <Tool name="Орфография" />
        <Tool name="Справочники" />
        <Separator />
        <Tool name="Вырезать" />
        <Tool name="Копировать" />
        <Tool name="Вставить" />
        <More name="Варианты вставки" faded />
        <Tool name="Формат по образцу" />
        <Separator />
        <Tool name="Отменить" />
        <More name="Список отмены" />
        <Tool name="Вернуть" />
        <More name="Список возврата" faded />
        <Separator />
        <Tool name="Гиперссылка" />
        <Tool name="Автосумма" />
        <More name="Функции" />
        <SortTool name="Сортировка по возрастанию" top="А" bottom="Я" />
        <SortTool name="Сортировка по убыванию" top="Я" bottom="А" />
        <Separator />
        <Tool name="Мастер" />
        <Tool name="Рисование" />
        <Combo name="Масштаб" value="75%" className="w-[69px]" />
        <Tool name="Справка" />
        <ToolbarEnd />
      </div>
      <div className={bar}>
        <Handle />
        <Combo name="Шрифт" value="Arial Cyr" className="mr-[2px] w-[153px]" />
        <Combo name="Размер" value="10" className="w-[46px]" />
        <Separator />
        <TextTool name="Полужирный" className={serif}>Ж</TextTool>
        <TextTool name="Курсив" className={`${serif} italic`}>К</TextTool>
        <TextTool name="Подчеркнутый" className={`${serif} underline`}>Ч</TextTool>
        <Separator />
        <Tool name="По левому краю" />
        <Tool name="По центру" />
        <Tool name="По правому краю" />
        <Tool name="Объединить ячейки" />
        <Separator />
        <Tool name="Денежный формат" />
        <TextTool name="Процентный формат" className="text-[12px]">%</TextTool>
        <TextTool name="Формат с разделителями" className="text-[10px]">000</TextTool>
        <Digits name="Увеличить разрядность" more />
        <Digits name="Уменьшить разрядность" />
        <Separator />
        <Tool name="Уменьшить отступ" />
        <Tool name="Увеличить отступ" />
        <Separator />
        <Tool name="Границы" />
        <More name="Виды границ" />
        <Tool name="Цвет заливки" />
        <More name="Цвета заливки" />
        <TextTool name="Цвет шрифта" className="flex-col font-['Liberation_Serif',serif] text-[15px] leading-[14px] font-bold text-[#2b4f9e]">
          A
          <span className="h-[4px] w-[16px] bg-[#e81414]" />
        </TextTool>
        <More name="Цвета шрифта" />
        <ToolbarEnd />
      </div>
    </div>
  );
}

function FormulaBar() {
  return (
    <div className="flex h-[16px] pl-[2px] text-[13px]">
      <input aria-label="Имя ячейки" defaultValue="Q10" className="w-[92px] bg-white text-center text-[13px]" />
      <button aria-label="Список имен" className="flex w-[20px] items-center justify-center">
        <Triangle />
      </button>
      <button aria-label="Вставка функции" className="ml-[37px] w-[18px] font-['Liberation_Serif',serif] text-[13px] leading-[16px] font-bold italic">
        fx
      </button>
      <input
        aria-label="Строка формул"
        defaultValue={'=ЕСЛИ(B10="";"";ВПР($B10;Продукты!$A$4:$AS$1078;13;ЛОЖЬ)*$C10/ВПР($B10;Продукты!$A$4:$BQ$1078;2))'}
        className="min-w-0 flex-1 bg-white pl-[6px] text-[13px]"
      />
    </div>
  );
}

function Arrow({ name, d, className }: { name: string; d: string; className: string }) {
  return (
    <button aria-label={name} className={clsx("flex items-center justify-center", className)}>
      <svg width="8" height="8" viewBox="0 0 8 8" aria-hidden="true">
        <path d={d} fill="#333" />
      </svg>
    </button>
  );
}

function VerticalScroll() {
  return (
    <div className="flex w-[18px] shrink-0 flex-col border-l border-[#c4c4c4] bg-[#efefef] pr-[2px]">
      <Arrow name="Вверх" d="M0 6l4-4 4 4z" className="h-[18px]" />
      <div className="flex h-[785px] flex-col items-center justify-center gap-px rounded-sm border border-[#8c8c8c] bg-linear-to-r from-[#f6f6f6] to-[#c4c4c8]">
        {[0, 1, 2].map((i) => (
          <span key={i} className="h-[2px] w-[8px] border-b border-white bg-[#777]" />
        ))}
      </div>
      <Arrow name="Вниз" d="M0 2l4 4 4-4z" className="mt-auto h-[16px]" />
    </div>
  );
}

function Tab({ name, width, fill, text }: { name: string; width: string; fill: string; text: string }) {
  return (
    <button className={clsx("relative -ml-[9px] h-[16px] text-[12px] leading-[15px]", width, text)}>
      <svg viewBox="0 0 100 16" preserveAspectRatio="none" className="absolute inset-0 h-full w-full" aria-hidden="true">
        <path d="M0 0L7 15.500H93L100 0" fill={fill} stroke="#444" vectorEffect="non-scaling-stroke" />
      </svg>
      <span className="relative block h-full">{name}</span>
    </button>
  );
}

function TabBar() {
  return (
    <div className="flex h-[17px] bg-[#efefef]">
      <div className="flex min-w-0 flex-1 border-t border-[#9a9a9a]">
        <div className="flex w-[67px] items-center border-r border-[#9a9a9a]">
          <Arrow name="Первый лист" d="M0 0h1.500v8H0zM7 0v8L2.500 4z" className="w-[17px]" />
          <Arrow name="Предыдущий лист" d="M6 0v8L2 4z" className="w-[16px]" />
          <Arrow name="Следующий лист" d="M2 0v8l4-4z" className="w-[17px]" />
          <Arrow name="Последний лист" d="M1 0v8l4.500-4zM6.500 0H8v8H6.500z" className="w-[17px]" />
        </div>
        <div className="ml-[8px] flex font-['Open_Sans',sans-serif]">
          <Tab name="Описание" width="w-[80px]" fill="#f4f4f4" text="text-black" />
          <Tab name="Продукты" width="w-[82px]" fill="#ff0000" text="text-white" />
          <Tab name="Рацион" width="w-[74px]" fill="#ffffff" text="z-10 font-bold text-black underline decoration-[#0000aa]" />
          <Tab name="Личные данные" width="w-[120px]" fill="#008000" text="text-white" />
        </div>
      </div>
      <div className="flex w-[565px] shrink-0">
        <span className="w-[4px] border-r-2 border-l border-l-[#9a9a9a] border-r-black" />
        <Arrow name="Влево" d="M6 0v8L2 4z" className="w-[16px]" />
        <div className="flex h-[16px] w-[63px] items-center justify-center gap-px rounded-sm border border-[#8c8c8c] bg-linear-to-b from-[#f8f8f8] to-[#c8c8cc]">
          {[0, 1, 2].map((i) => (
            <span key={i} className="h-[7px] w-[2px] border-r border-white bg-[#777]" />
          ))}
        </div>
        <Arrow name="Вправо" d="M2 0v8l4-4z" className="mr-[3px] ml-auto w-[15px]" />
        <svg width="14" height="16" viewBox="0 0 14 16" className="mr-[2px]" fill="#b8b8b8" aria-hidden="true">
          <path d="M11 6h2v2h-2zM8 9h2v2H8zM11 9h2v2h-2zM5 12h2v2H5zM8 12h2v2H8zM11 12h2v2h-2z" />
        </svg>
      </div>
    </div>
  );
}

const PANES = ["w-[34px]", "w-[112px]", "w-[26px]", "w-[30px]", "w-[26px]", "w-[29px]", "w-[26px]", "w-[33px]"];

function StatusBar() {
  return (
    <footer className="flex h-[20px] items-center justify-between border-t border-white bg-[#efefef] pt-[2px] pr-[3px] pl-[5px] font-['Open_Sans',sans-serif] text-[11px] leading-[15px]">
      <span>Готово</span>
      <div className="flex gap-px">
        {PANES.map((w, i) => (
          <span key={i} className={clsx("h-[15px] border border-[#d0d0d0]", w)} />
        ))}
      </div>
    </footer>
  );
}

function TaskButton({ name, look, children }: { name: string; look: string; children: ReactNode }) {
  return (
    <button
      aria-label={name}
      className={clsx("flex h-[38px] w-[58px] items-center justify-center rounded-sm border", look)}
    >
      {children}
    </button>
  );
}

function TaskBar() {
  const running = "border-[#8c8c8c] bg-linear-to-br from-[#7c7c7c] via-[#3c3c3c] to-[#2c2c2c]";
  return (
    <div className="relative flex h-[40px] items-center justify-between border-t border-[#777] bg-linear-to-r from-[#161616] via-[#1c1c1c] to-[#262626] text-white">
      <svg className="absolute inset-y-0 left-[630px] h-full w-[140px]" viewBox="0 0 140 40" aria-hidden="true">
        <defs>
          <filter id="soft">
            <feGaussianBlur stdDeviation="4" />
          </filter>
        </defs>
        <g filter="url(#soft)">
          <path d="M58 -8L88 -8L68 18L48 48H14L42 20z" fill="#7c7c78" />
          <path d="M78 4L96 10L132 48H106z" fill="#505050" />
        </g>
      </svg>
      <div className="relative flex items-center gap-[4px]">
        <button aria-label="Пуск" className="mx-[8px] w-[40px]">
          <svg width="38" height="38" viewBox="0 0 38 38" aria-hidden="true">
            <defs>
              <radialGradient id="orb" cx="50%" cy="90%" r="90%">
                <stop offset="0" stopColor="#3cd0f8" />
                <stop offset="0.500" stopColor="#1c5c98" />
                <stop offset="1" stopColor="#9ab8cc" />
              </radialGradient>
            </defs>
            <circle cx="19" cy="19" r="18" fill="url(#orb)" stroke="#8fb0c4" />
            <path d="M10 12c3-2 5-2 8 0l-1.500 7c-3-2-5-2-8 0z" fill="#ee6a35" />
            <path d="M19.500 12.500c3 2 5 2 9-.500l-2 7c-3 2-5 2-8.500.500z" fill="#93c83e" />
            <path d="M8 20.500c3-2 5-2 8 0l-1.500 6.500c-3-2-5-2-8 0z" fill="#53aee8" />
            <path d="M17.500 21c3 2 5 2 8.500 0l-2 7c-3 2-5 1.500-8 0z" fill="#fcd245" />
          </svg>
        </button>
        <TaskButton name="Проводник" look={running}>
          <svg width="34" height="32" viewBox="0 0 34 32" aria-hidden="true">
            <path d="M3 5h12l2 3h14v20H3z" fill="#e8cf7c" />
            <path d="M5 2h6v6H5zM15 4h7v6h-7zM23 6h7v6h-7z" fill="#fff" />
            <path d="M5 2h3v2H5z" fill="#2a9a3c" />
            <path d="M15 4h4v2h-4z" fill="#d84a30" />
            <path d="M23 6h4v2h-4z" fill="#3c8ad8" />
            <path d="M2 10h30v18H2z" fill="#f8e7a4" stroke="#c8ab58" />
            <path d="M7 31v-9q0-3 3-3h14q3 0 3 3v9h-5v-6H12v6z" fill="#a8dcf4" stroke="#5a9cc4" />
          </svg>
        </TaskButton>
        <TaskButton name="Проигрыватель" look="border-transparent">
          <svg width="28" height="28" viewBox="0 0 28 28" aria-hidden="true">
            <path d="M9 1h17v24l-5 2H9z" fill="#6ea4cc" stroke="#3c6c98" />
            <path d="M2 2h19v24H2z" fill="#a8d0ec" stroke="#4c84b4" />
            <circle cx="12" cy="14" r="8.500" fill="#ee7a20" />
            <path d="M9 8.500v11l9-5.500z" fill="#fff" />
          </svg>
        </TaskButton>
        <TaskButton name="Firefox" look="border-transparent">
          <svg width="32" height="32" viewBox="0 0 32 32" aria-hidden="true">
            <circle cx="17" cy="14" r="12.500" fill="#2c6cb8" />
            <path d="M14 3c5-2 9 0 11 3-4-1-5 1-4 3l-5 2z" fill="#7cc4ec" />
            <path d="M4 4c-3 6-4 14 0 20 5 8 17 9 23 2 4-4 5-11 2-16 0 4-1 5-2 6-1 6-6 8-10 7-3-1-5-3-5-5 2 1 4 0 6-2-2-1-3-2-6-2 0-2 1-3 3-4-2-1-4 0-5 1C8 9 8 8 9 5 7 6 6 7 5 8z" fill="#e06a18" />
            <path d="M29 10c0 4-1 5-2 6-1 6-6 8-10 7 4 4 11 2 12.500-4 .500-3 .500-6-.500-9z" fill="#f8b83c" />
            <path d="M4 8c-2 5-2 11 2 16-1-4-1-7 1-9-2-2-3-4-3-7z" fill="#f08c28" />
          </svg>
        </TaskButton>
        <TaskButton name="Chrome" look="border-[#9c9c9c] bg-linear-to-br from-[#a0a0a0] via-[#5c5c5c] to-[#444]">
          <svg width="30" height="30" viewBox="0 0 30 30" aria-hidden="true">
            <path d="M15 15L2.900 8A14 14 0 0 1 27.100 8z" fill="#dc3a2c" />
            <path d="M15 15L27.100 8A14 14 0 0 1 15 29z" fill="#fbd02c" />
            <path d="M15 15L15 29A14 14 0 0 1 2.900 8z" fill="#3ca848" />
            <path d="M15 8h12.100L21.500 18z" fill="#fbd02c" />
            <path d="M2.900 8L9 18.500 15 8z" fill="#dc3a2c" />
            <path d="M2.900 8l6 10.500L15 22l-1 7A14 14 0 0 1 2.900 8z" fill="#3ca848" />
            <circle cx="15" cy="15" r="6.800" fill="#f4f4f4" />
            <circle cx="15" cy="15" r="5.300" fill="#3c7cc8" />
          </svg>
        </TaskButton>
        <TaskButton name="QIP" look={running}>
          <svg width="32" height="30" viewBox="0 0 32 30" fill="none" aria-hidden="true">
            <path d="M8.500 27V17H2v5h6M23.500 27V17H30v5h-6" stroke="#e8e8e8" strokeWidth="2" />
            <path d="M10.500 6h11l-2.500 22h-6z" fill="#e8f4e8" stroke="#ccc" />
            <path d="M12.500 9h7l-1.300 17h-4.400z" fill="#3ccc30" />
            <path d="M12.500 9h7l-.500 5h-6z" fill="#1c8c20" />
            <path d="M10 2l2 4" stroke="#e8e8e8" strokeWidth="1.500" />
          </svg>
        </TaskButton>
        <TaskButton name="Microsoft Excel" look="border-[#c8c8c8] bg-linear-to-br from-[#c4c4c4] via-[#909090] to-[#7c7c7c]">
          <ExcelMark size={28} />
        </TaskButton>
      </div>
      <div className="relative flex h-full items-center font-['Open_Sans',sans-serif] text-[12px]">
        <button aria-label="Язык ввода: RU" className="mr-[16px] mb-[6px]">RU</button>
        <button aria-label="Скрытые значки" className="mr-[15px]">
          <Triangle className="rotate-180" />
        </button>
        <button aria-label="Центр поддержки" className="mr-[8px]">
          <svg width="16" height="16" viewBox="0 0 16 16" aria-hidden="true">
            <path d="M1 1h1.500v14H1z" fill="#fff" />
            <path d="M3 2h6v2h5v6H8V8H3z" fill="#fff" />
            <circle cx="11" cy="11" r="4.500" fill="#d8281c" />
            <path d="M9 9l4 4M13 9l-4 4" stroke="#fff" strokeWidth="1.500" />
          </svg>
        </button>
        <button aria-label="Питание" className="mr-[8px]">
          <svg width="16" height="16" viewBox="0 0 16 16" fill="none" aria-hidden="true">
            <path d="M8 14.500H1.500v-12h6M3 1.500h2.500" stroke="#fff" strokeWidth="1.600" />
            <path d="M6 5.500h8V9q-4 3.500-8 0z" fill="#fff" />
            <path d="M8 2v4M12 2v4M10 10v4" stroke="#fff" strokeWidth="1.600" />
          </svg>
        </button>
        <button aria-label="Громкость" className="mr-[15px]">
          <svg width="16" height="16" viewBox="0 0 16 16" fill="none" aria-hidden="true">
            <path d="M1 5h3l4-4v14l-4-4H1z" fill="#fff" />
            <path d="M10 5.500q2 2.500 0 5M12 4q3.500 4 0 8" stroke="#ccc" strokeWidth="1.200" />
          </svg>
        </button>
        <time className="mr-[10px] flex h-full w-[58px] flex-col items-center pt-[4px] text-[11px] leading-[16px]">
          <span>13:01</span>
          <span>12.08.2011</span>
        </time>
        <button aria-label="Свернуть все окна" className="h-full w-[14px] border border-[#777] bg-linear-to-b from-[#666] via-[#181818] to-[#333]" />
      </div>
      <a
        href="#steelfactor"
        className="absolute right-[10px] -bottom-[5px] bg-[#c4c8cc]/70 text-[10px] leading-[10px] text-[#26405c]"
      >
        STEELFACTOR.RU
      </a>
    </div>
  );
}

export default function App() {
  return (
    <div className="min-h-screen w-full overflow-hidden bg-white font-['Liberation_Sans',Arial,sans-serif] text-black">
      <TitleBar />
      <div className="bg-linear-to-r from-[#9ebcf6] to-[#c4daf9] to-50%">
        <MenuBar />
        <Toolbars />
        <FormulaBar />
        <div className="h-[3px] border-b border-[#7c8794]" />
      </div>
      <main className="flex">
        <div className="min-w-0 flex-1 overflow-hidden border-l-2 border-[#9c9c9c]">
          <Sheet />
        </div>
        <VerticalScroll />
      </main>
      <TabBar />
      <StatusBar />
      <TaskBar />
    </div>
  );
}
